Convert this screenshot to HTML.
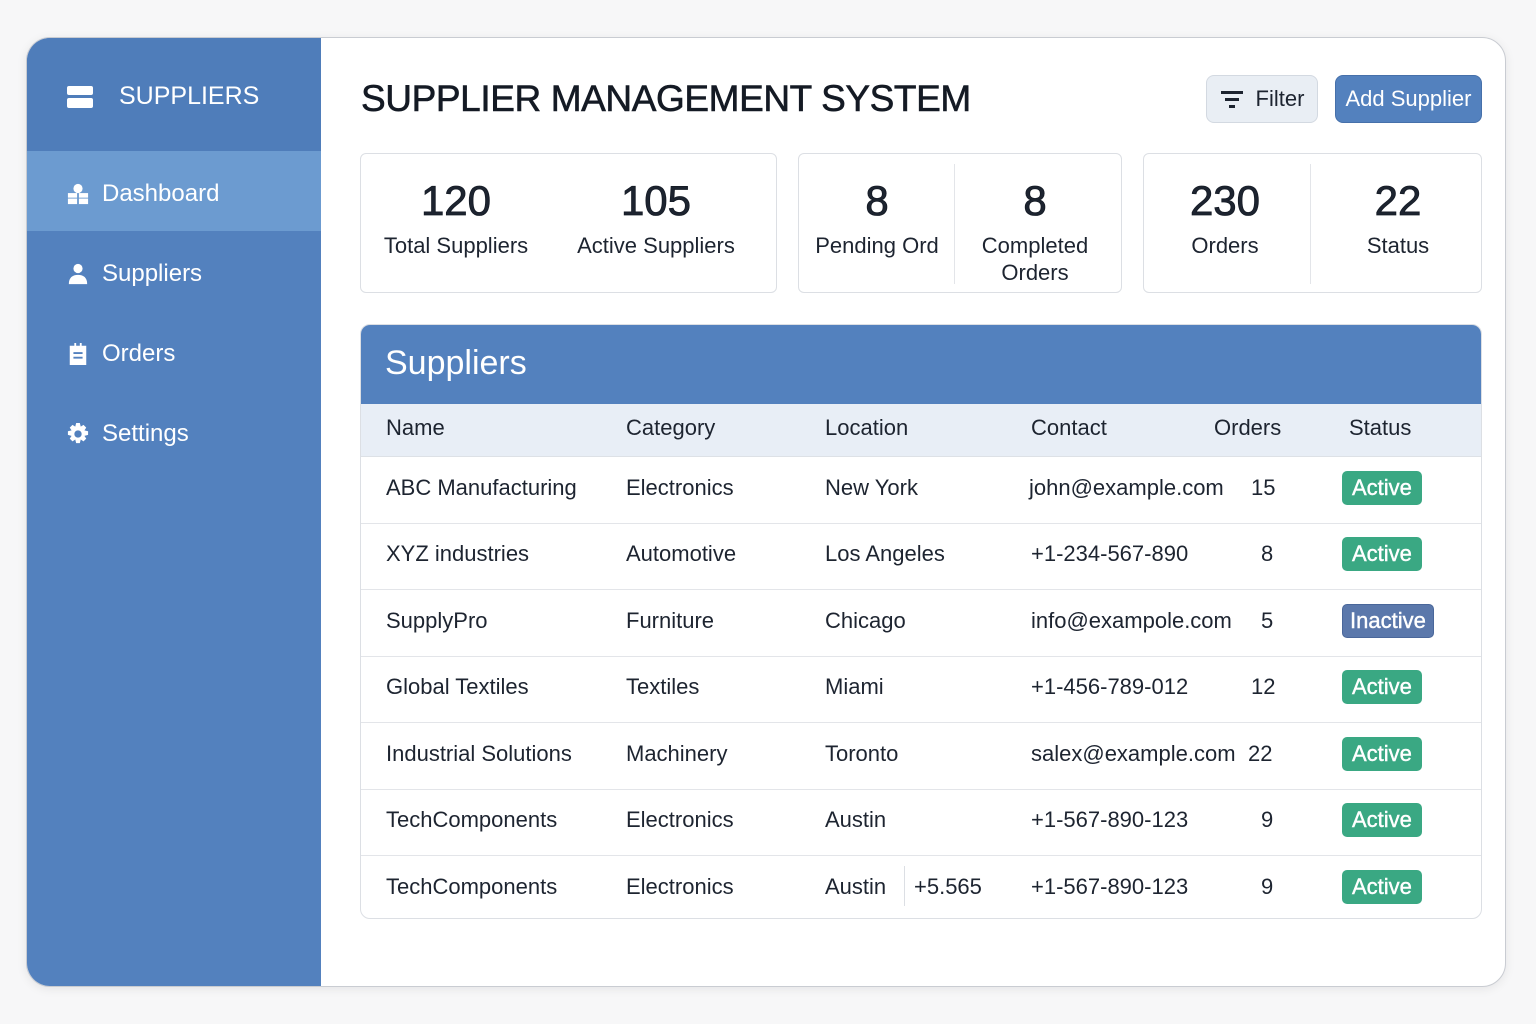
<!DOCTYPE html>
<html><head><meta charset="utf-8"><style>
*{box-sizing:border-box;margin:0;padding:0}
body{width:1536px;height:1024px;background:#f7f7f8;font-family:"Liberation Sans",sans-serif;position:relative;overflow:hidden;color:#1d2430}
.card{position:absolute;left:26px;top:37px;width:1480px;height:950px;background:#fff;border-radius:24px;border:1px solid #c9ccd2;overflow:hidden;box-shadow:0 2px 10px rgba(0,0,0,.08)}
.side{position:absolute;left:0;top:0;width:294px;height:100%;background:#5381be}
.brand{height:113px;background:#4f7dba;display:flex;align-items:center;padding-left:40px;color:#fff;font-size:25px;padding-top:4px}
.brand .ic{width:26px;height:22px;margin-right:26px}
.nav{height:80px;display:flex;align-items:center;padding-left:40px;color:#fff;font-size:24px;padding-top:5px}
.nav.act{background:#6c9bd0}
.nav svg{width:22px;height:24px;margin-right:13px;fill:#fff}
h1{position:absolute;left:334px;top:40px;font-size:37px;font-weight:normal;letter-spacing:-0.4px;color:#141a24;-webkit-text-stroke:0.6px #141a24}
.btn{position:absolute;top:37px;height:48px;border-radius:8px;font-size:22px;display:flex;align-items:center;justify-content:center}
.stat{position:absolute;top:115px;height:140px;border:1px solid #dcdfe4;border-radius:6px;background:#fff}
.s{position:absolute;text-align:center;font-size:22px;color:#1d2430;line-height:27px}
.s b{display:block;font-size:42px;font-weight:normal;-webkit-text-stroke:0.8px #141a24;line-height:50px;margin-bottom:6px}
.vd{position:absolute;top:10px;width:1px;height:120px;background:#e3e5e9}
.panel{position:absolute;left:333px;top:286px;width:1122px;height:595px;border:1px solid #dcdfe4;border-radius:10px;overflow:hidden}
.ph{height:79px;background:#5381be;color:#fff;font-size:34px;padding:19px 0 0 24px}
.th{height:53px;background:#e8eef6;position:relative;font-size:22px;border-bottom:1px solid #dde1e6}
.row{height:66.5px;position:relative;font-size:22px;border-bottom:1px solid #e3e5e9}
.row:last-child{border-bottom:none}
.c{position:absolute;top:47%;transform:translateY(-50%);white-space:nowrap}
.bd{position:absolute;left:981px;top:47%;transform:translateY(-50%);height:34px;padding:0 10px;border-radius:5px;color:#fff;font-size:22px;line-height:34px;-webkit-text-stroke:0.4px #fff}
.g{background:#3aa883}.i{background:#5b78ab;border:1px solid #4a679a;padding:0 7px;line-height:32px}
</style></head><body>
<div class="card">
 <div class="side">
  <div class="brand"><svg class="ic" viewBox="0 0 26 22"><rect x="0" y="0" width="26" height="9" rx="2" fill="#fff"/><rect x="0" y="12" width="26" height="10" rx="2" fill="#fff"/></svg>SUPPLIERS</div>
  <div class="nav act"><svg viewBox="0 0 24 24"><circle cx="12" cy="6" r="5"/><rect x="1" y="11" width="10" height="5"/><rect x="13" y="11" width="10" height="5"/><rect x="1" y="17" width="10" height="6"/><rect x="13" y="17" width="10" height="6"/></svg>Dashboard</div>
  <div class="nav"><svg viewBox="0 0 24 24"><circle cx="12" cy="6" r="5"/><path d="M2 23c0-7 4-10 10-10s10 3 10 10z"/></svg>Suppliers</div>
  <div class="nav"><svg viewBox="0 0 24 24"><path d="M3 3h5V0h2v3h4V0h2v3h5v21H3zM7 10v2h10v-2zm0 5v2h10v-2z" fill-rule="evenodd"/></svg>Orders</div>
  <div class="nav"><svg viewBox="0 0 24 24"><path d="M10 0h4l1 4 3-2 3 3-2 3 4 1v4l-4 1 2 3-3 3-3-2-1 4h-4l-1-4-3 2-3-3 2-3-4-1v-4l4-1-2-3 3-3 3 2zM12 8a4 4 0 100 8 4 4 0 100-8z" fill-rule="evenodd"/></svg>Settings</div>
 </div>
 <h1>SUPPLIER MANAGEMENT SYSTEM</h1>
 <div class="btn" style="left:1179px;width:112px;background:#e9eef4;border:1px solid #d3d9e1;color:#1d2430"><svg width="24" height="20" viewBox="0 0 24 20" style="margin-right:12px"><rect x="1" y="2" width="22" height="3" fill="#1d2430"/><rect x="5" y="9" width="14" height="3" fill="#1d2430"/><rect x="9" y="16" width="6" height="3" fill="#1d2430"/></svg>Filter</div>
 <div class="btn" style="left:1308px;width:147px;background:#5381be;border:1px solid #4670aa;color:#fff">Add Supplier</div>

 <div class="stat" style="left:333px;width:417px">
  <div class="s" style="left:0;width:190px;top:22px"><b>120</b>Total Suppliers</div>
  <div class="s" style="left:200px;width:190px;top:22px"><b>105</b>Active Suppliers</div>
 </div>
 <div class="stat" style="left:771px;width:324px">
  <div class="s" style="left:0;width:156px;top:22px"><b>8</b>Pending Ord</div>
  <div class="vd" style="left:155px"></div>
  <div class="s" style="left:156px;width:160px;top:22px"><b>8</b>Completed<br>Orders</div>
 </div>
 <div class="stat" style="left:1116px;width:339px">
  <div class="s" style="left:0;width:162px;top:22px"><b>230</b>Orders</div>
  <div class="vd" style="left:166px"></div>
  <div class="s" style="left:166px;width:176px;top:22px"><b>22</b>Status</div>
 </div>

 <div class="panel">
  <div class="ph">Suppliers</div>
  <div class="th"><span class="c" style="left:25px">Name</span><span class="c" style="left:265px">Category</span><span class="c" style="left:464px">Location</span><span class="c" style="left:670px">Contact</span><span class="c" style="left:853px">Orders</span><span class="c" style="left:988px">Status</span></div>
  <div class="row"><span class="c" style="left:25px">ABC Manufacturing</span><span class="c" style="left:265px">Electronics</span><span class="c" style="left:464px">New York</span><span class="c" style="left:668px">john@example.com</span><span class="c" style="left:890px">15</span><span class="bd g">Active</span></div>
  <div class="row"><span class="c" style="left:25px">XYZ industries</span><span class="c" style="left:265px">Automotive</span><span class="c" style="left:464px">Los Angeles</span><span class="c" style="left:670px">+1-234-567-890</span><span class="c" style="left:900px">8</span><span class="bd g">Active</span></div>
  <div class="row"><span class="c" style="left:25px">SupplyPro</span><span class="c" style="left:265px">Furniture</span><span class="c" style="left:464px">Chicago</span><span class="c" style="left:670px">info@exampole.com</span><span class="c" style="left:900px">5</span><span class="bd i">Inactive</span></div>
  <div class="row"><span class="c" style="left:25px">Global Textiles</span><span class="c" style="left:265px">Textiles</span><span class="c" style="left:464px">Miami</span><span class="c" style="left:670px">+1-456-789-012</span><span class="c" style="left:890px">12</span><span class="bd g">Active</span></div>
  <div class="row"><span class="c" style="left:25px">Industrial Solutions</span><span class="c" style="left:265px">Machinery</span><span class="c" style="left:464px">Toronto</span><span class="c" style="left:670px">salex@example.com</span><span class="c" style="left:887px">22</span><span class="bd g">Active</span></div>
  <div class="row"><span class="c" style="left:25px">TechComponents</span><span class="c" style="left:265px">Electronics</span><span class="c" style="left:464px">Austin</span><span class="c" style="left:670px">+1-567-890-123</span><span class="c" style="left:900px">9</span><span class="bd g">Active</span></div>
  <div class="row"><span class="c" style="left:25px">TechComponents</span><span class="c" style="left:265px">Electronics</span><span class="c" style="left:464px">Austin</span><span style="position:absolute;left:543px;top:10px;width:1px;height:40px;background:#dcdfe4"></span><span class="c" style="left:553px">+5.565</span><span class="c" style="left:670px">+1-567-890-123</span><span class="c" style="left:900px">9</span><span class="bd g">Active</span></div>
 </div>
</div>
</body></html>
